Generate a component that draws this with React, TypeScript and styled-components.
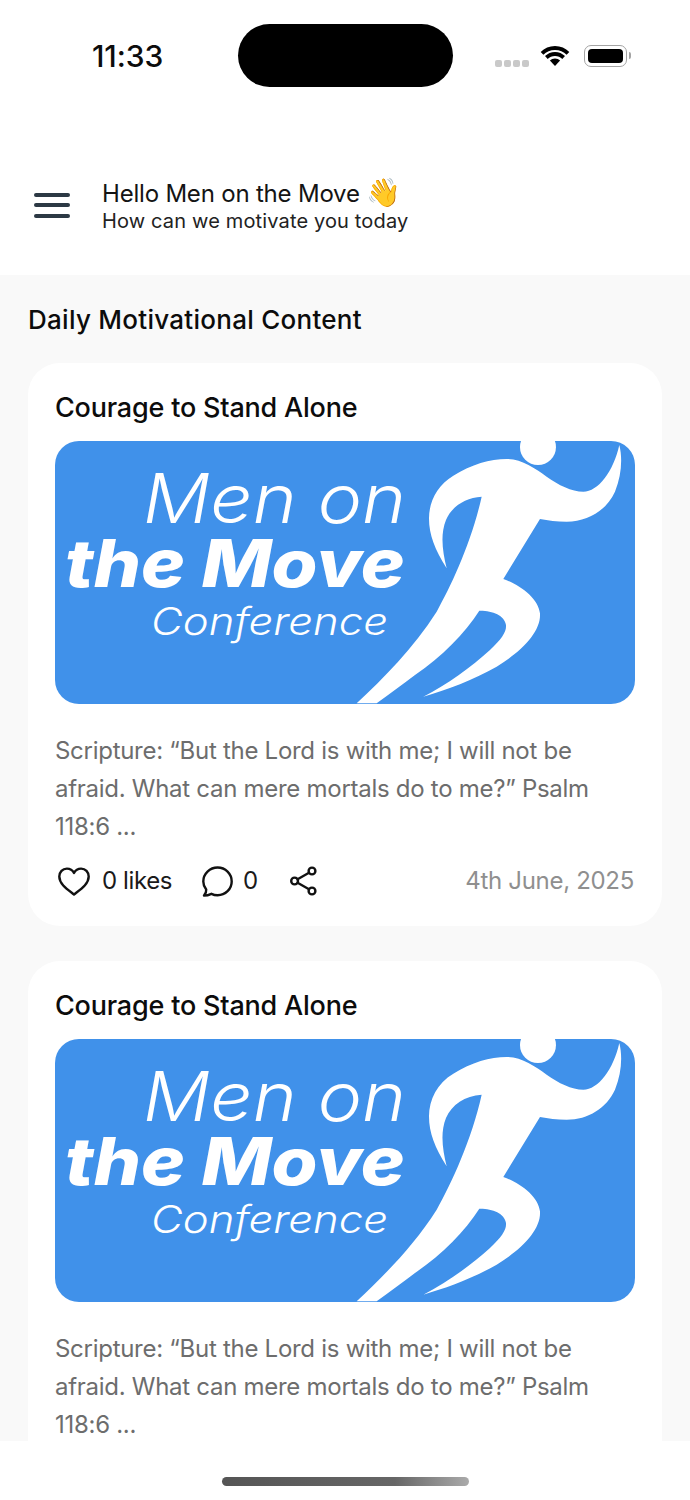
import styled, { createGlobalStyle } from 'styled-components'

const GlobalStyle = createGlobalStyle`
  html, body {
    margin: 0;
    padding: 0;
    background: #fff;
  }
  * {
    box-sizing: border-box;
  }
  body {
    font-family: Inter, "Liberation Sans", sans-serif;
  }
`

const RUNNER =
  'M290 400 C255 345 237 300 237 250 C237 200 262 150 310 122 C365 88 420 72 470 72 C515 72 555 100 590 125 C625 150 665 170 700 170 C745 170 790 110 808 30 C818 70 815 120 795 170 C770 225 715 260 650 260 C620 260 595 257 570 252 L460 432 C510 450 565 490 570 535 C574 590 515 650 440 695 C370 735 290 765 220 785 C290 750 365 695 420 645 C455 612 470 590 468 570 C464 540 425 526 388 527 C345 595 275 665 195 720 C155 750 115 780 80 805 L20 805 C100 730 190 640 260 530 C305 450 365 320 395 185 C345 188 305 215 288 255 C270 300 278 350 290 400 Z'

const Logo = () => (
  <LogoSvg viewBox="0 0 580 263">
    <LogoLight x="88" y="82" fontSize="68" textLength="263" lengthAdjust="spacingAndGlyphs">
      Men on
    </LogoLight>
    <LogoBold x="10" y="146" fontSize="66" textLength="340" lengthAdjust="spacingAndGlyphs">
      the Move
    </LogoBold>
    <LogoLight x="96" y="194" fontSize="38" textLength="237" lengthAdjust="spacingAndGlyphs">
      Conference
    </LogoLight>
    <g transform="translate(295 -6) scale(0.3333)">
      <circle cx="564" cy="36" r="54" fill="#fff" />
      <path d={RUNNER} fill="#fff" />
    </g>
  </LogoSvg>
)

const Card = ({ showActions }: { showActions: boolean }) => (
  <CardBox>
    <CardTitle>Courage to Stand Alone</CardTitle>
    <Logo />
    <CardBody>
      Scripture: “But the Lord is with me; I will not be afraid. What can mere mortals do to me?” Psalm 118:6 ...
    </CardBody>
    {showActions && (
      <ActionRow>
        <ActionGroup $gap={12}>
          <ActionIcon width="32" height="29" viewBox="0 0 32 29">
            <path d="M16 27.5 C10 22.8 1.3 17.5 1.3 9.6 C1.3 5 4.6 1.6 8.9 1.6 C11.8 1.6 14.5 3.1 16 6 C17.5 3.1 20.2 1.6 23.1 1.6 C27.4 1.6 30.7 5 30.7 9.6 C30.7 17.5 22 22.8 16 27.5 Z" />
          </ActionIcon>
          <ActionLabel>0 likes</ActionLabel>
        </ActionGroup>
        <ActionGroup $gap={10}>
          <ActionIcon width="31" height="31" viewBox="0 0 31 31">
            <path d="M4.2 23.6 C2.3 21.2 1.3 18.4 1.3 15.4 C1.3 7.8 7.8 1.5 15.6 1.5 C23.4 1.5 29.7 7.8 29.7 15.4 C29.7 23 23.4 29.2 15.6 29.2 C13.4 29.2 11.3 28.7 9.4 27.8 C7.5 28.7 4.2 29.6 2 29.6 C3.4 28 4.4 25.7 4.2 23.6 Z" />
          </ActionIcon>
          <ActionLabel>0</ActionLabel>
        </ActionGroup>
        <ActionIcon width="27" height="30" viewBox="0 0 27 30">
          <circle cx="22" cy="5" r="3.4" />
          <circle cx="4.6" cy="15" r="3.4" />
          <circle cx="22" cy="25" r="3.4" />
          <path d="M7.6 13.3 L19 6.8 M7.6 16.7 L19 23.2" />
        </ActionIcon>
        <DateText>4th June, 2025</DateText>
      </ActionRow>
    )}
  </CardBox>
)

const App = () => {
  return (
    <Page>
      <GlobalStyle />
      <TopArea>
        <StatusBar>
          <Clock>11:33</Clock>
          <Island />
          <StatusIcons>
            <SignalDots>
              <SignalDot />
              <SignalDot />
              <SignalDot />
              <SignalDot />
            </SignalDots>
            <svg width="30" height="22" viewBox="0 0 30 22">
              <path d="M15 5 C19.6 5 23.6 6.8 26.6 9.8 L29.3 6.9 C25.6 3.2 20.6 1 15 1 C9.4 1 4.4 3.2 .7 6.9 L3.4 9.8 C6.4 6.8 10.4 5 15 5 Z" />
              <path d="M15 11 C17.9 11 20.4 12.1 22.3 14 L25 11.1 C22.4 8.6 18.9 7 15 7 C11.1 7 7.6 8.6 5 11.1 L7.7 14 C9.6 12.1 12.1 11 15 11 Z" />
              <path d="M15 13.5 C13 13.5 11.2 14.3 9.9 15.6 L15 21 L20.1 15.6 C18.8 14.3 17 13.5 15 13.5 Z" />
            </svg>
            <Battery>
              <BatteryFill />
              <BatteryCap />
            </Battery>
          </StatusIcons>
        </StatusBar>
        <Header>
          <MenuIcon>
            <MenuLine />
            <MenuLine />
            <MenuLine />
          </MenuIcon>
          <Greeting>
            <GreetingTitle>
              Hello Men on the Move <Wave>👋</Wave>
            </GreetingTitle>
            <GreetingSub>How can we motivate you today</GreetingSub>
          </Greeting>
        </Header>
      </TopArea>
      <Content>
        <SectionTitle>Daily Motivational Content</SectionTitle>
        <Card showActions />
        <Card showActions={false} />
      </Content>
      <BottomBar>
        <HomeIndicator />
      </BottomBar>
    </Page>
  )
}

const Page = styled.div`
  width: 690px;
  height: 1500px;
  display: flex;
  flex-direction: column;
  overflow: hidden;
  background: #fff;
`
const TopArea = styled.div`
  height: 275px;
  flex-shrink: 0;
  background: #fff;
`
const StatusBar = styled.div`
  height: 111px;
  padding: 24px 60px 0 92px;
  display: flex;
  align-items: flex-start;
`
const Clock = styled.div`
  width: 146px;
  margin-top: 12px;
  font-size: 30px;
  line-height: 40px;
  font-weight: 500;
  letter-spacing: -0.1px;
  color: #0c0c0c;
`
const Island = styled.div`
  width: 215px;
  height: 63px;
  border-radius: 32px;
  background: #000;
`
const StatusIcons = styled.div`
  margin-left: 42px;
  height: 63px;
  display: flex;
  align-items: center;
  gap: 11px;
`
const SignalDots = styled.div`
  display: flex;
  gap: 2px;
  margin-top: 15px;
`
const SignalDot = styled.span`
  width: 7px;
  height: 7px;
  border-radius: 2px;
  background: #c9c9c9;
`
const Battery = styled.div`
  position: relative;
  width: 43px;
  height: 22px;
  margin-left: 3px;
  padding: 3px;
  border: 1.5px solid #a4a4a4;
  border-radius: 7px;
`
const BatteryFill = styled.div`
  width: 100%;
  height: 100%;
  border-radius: 4px;
  background: #000;
`
const BatteryCap = styled.div`
  position: absolute;
  right: -4.5px;
  top: 6px;
  width: 2px;
  height: 7px;
  border-radius: 0 2px 2px 0;
  background: #a4a4a4;
`
const Header = styled.div`
  display: flex;
  align-items: center;
  padding: 33px 0 0 34px;
  height: 155px;
`
const MenuIcon = styled.div`
  width: 36px;
  margin-right: 32px;
  display: flex;
  flex-direction: column;
  gap: 6.5px;
`
const MenuLine = styled.span`
  height: 4px;
  border-radius: 2px;
  background: #2c3944;
`
const Greeting = styled.div`
  display: flex;
  flex-direction: column;
`
const GreetingTitle = styled.div`
  font-size: 24px;
  line-height: 30px;
  letter-spacing: -0.2px;
  color: #141414;
  white-space: nowrap;
`
const Wave = styled.span`
  font-size: 28px;
  line-height: 28px;
`
const GreetingSub = styled.div`
  font-size: 20px;
  line-height: 24px;
  letter-spacing: 0.15px;
  color: #222;
`
const Content = styled.div`
  flex: 1;
  min-height: 0;
  overflow: hidden;
  background: #f9f9f9;
  padding: 0 28px;
`
const SectionTitle = styled.h2`
  margin: 0;
  padding: 28px 0 26px;
  font-size: 26px;
  line-height: 34px;
  font-weight: 500;
  letter-spacing: 0.27px;
  color: #0c0c0c;
`
const CardBox = styled.div`
  width: 634px;
  height: 563px;
  margin-bottom: 35px;
  padding: 27px 27px 0 27px;
  border-radius: 32px;
  background: #fff;
  flex-shrink: 0;
`
const CardTitle = styled.h3`
  margin: 0 0 15px;
  font-size: 27px;
  line-height: 36px;
  font-weight: 500;
  letter-spacing: -0.2px;
  color: #0c0c0c;
`
const LogoSvg = styled.svg`
  display: block;
  width: 580px;
  height: 263px;
  border-radius: 24px;
  background: #4091ea;
`
const LogoLight = styled.text`
  font-family: Inter, "Liberation Sans", sans-serif;
  font-style: italic;
  font-weight: 300;
  fill: #fff;
`
const LogoBold = styled.text`
  font-family: Inter, "Liberation Sans", sans-serif;
  font-style: italic;
  font-weight: 800;
  fill: #fff;
`
const CardBody = styled.p`
  margin: 28px 0 0;
  font-size: 24px;
  line-height: 38px;
  letter-spacing: -0.28px;
  color: #6d6d6d;
`
const ActionRow = styled.div`
  margin-top: 19px;
  padding-left: 3px;
  display: flex;
  align-items: center;
`
const ActionGroup = styled.div<{ $gap: number }>`
  display: flex;
  align-items: center;
  gap: ${(p) => p.$gap}px;
  margin-right: 32px;
  &:first-child {
    margin-right: 30px;
  }
`
const ActionIcon = styled.svg`
  fill: none;
  stroke: #111;
  stroke-width: 2.4;
  stroke-linejoin: round;
  stroke-linecap: round;
`
const ActionLabel = styled.span`
  font-size: 24px;
  line-height: 32px;
  letter-spacing: -0.4px;
  color: #1a1a1a;
`
const DateText = styled.span`
  margin-left: auto;
  margin-right: 1px;
  font-size: 24px;
  line-height: 32px;
  letter-spacing: -0.3px;
  color: #8f8f8f;
`
const BottomBar = styled.div`
  height: 59px;
  flex-shrink: 0;
  padding-top: 36px;
  display: flex;
  justify-content: center;
  background: #fff;
`
const HomeIndicator = styled.div`
  width: 247px;
  height: 9px;
  border-radius: 5px;
  background: linear-gradient(90deg, #555 0%, #666 70%, #aaa 100%);
`

export default App
